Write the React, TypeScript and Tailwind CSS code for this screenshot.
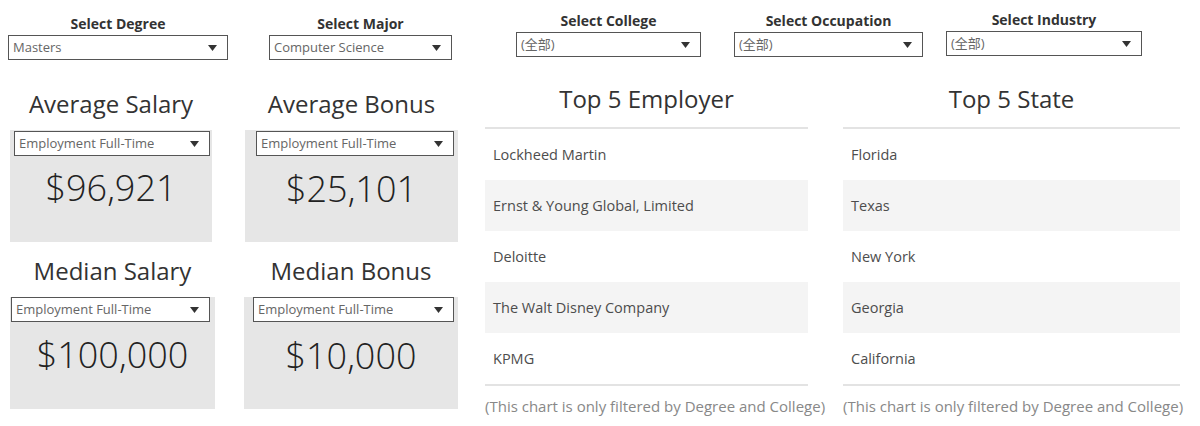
import React from 'react';

const font = { fontFamily: '"Open Sans", "Noto Sans CJK SC", sans-serif' };

const Arrow: React.FC = () => (
  <svg width="9" height="6" viewBox="0 0 9 6" className="shrink-0">
    <path d="M0 0h9L4.5 6z" fill="#333" />
  </svg>
);

const Dropdown: React.FC<{ value: string; className?: string }> = ({ value, className = '' }) => (
  <div
    className={`flex h-[25px] items-center justify-between border border-[#555] bg-white pl-[4px] pr-[10px] text-[13px] text-[#666] ${className}`}
  >
    <span className="truncate">{value}</span>
    <Arrow />
  </div>
);

const Filter: React.FC<{ label: string; value: string; className?: string }> = ({ label, value, className = '' }) => (
  <div className={`flex flex-col ${className}`}>
    <div className="text-center text-[14px] font-bold leading-[18px] text-[#333]">{label}</div>
    <Dropdown value={value} className="mt-[2px]" />
  </div>
);

const KpiCard: React.FC<{
  title: string;
  value: string;
  className?: string;
  dropClass?: string;
  valueClass?: string;
}> = ({ title, value, className = '', dropClass = '', valueClass = '' }) => (
  <div className={`flex flex-col ${className}`}>
    <div className="text-center text-[24px] leading-[32px] text-[#333]">{title}</div>
    <div className="mt-[10px] flex h-[112px] flex-col bg-[#e6e6e6]">
      <Dropdown value="Employment Full-Time" className={dropClass} />
      <div className={`text-center text-[36px] font-light leading-[44px] text-[#222] ${valueClass}`}>{value}</div>
    </div>
  </div>
);

const TopList: React.FC<{ title: string; items: string[]; className?: string }> = ({ title, items, className = '' }) => (
  <div className={`flex flex-col ${className}`}>
    <div className="text-center text-[24px] leading-[32px] text-[#333]">{title}</div>
    <div className="mt-[12px] h-[2px] bg-[#e3e3e3]" />
    {items.map((item, i) => (
      <div
        key={item}
        className={`flex h-[51px] items-center pl-[8px] text-[14.5px] text-[#4d4d4d] ${i % 2 === 1 ? 'bg-[#f4f4f4]' : 'bg-white'}`}
      >
        {item}
      </div>
    ))}
    <div className="h-[2px] bg-[#e3e3e3]" />
    <div className="mt-[10px] whitespace-nowrap text-[15px] leading-[20px] text-[#888]">
      (This chart is only filtered by Degree and College)
    </div>
  </div>
);

export default function App() {
  return (
    <div className="flex h-[426px] w-[1200px] overflow-hidden bg-white" style={font}>
      {/* left: filters + kpis */}
      <div className="flex w-[240px] flex-col pt-[15px]">
        <Filter label="Select Degree" value="Masters" className="ml-[8px] w-[220px]" />
        <KpiCard
          title="Average Salary"
          value="$96,921"
          className="ml-[10px] mt-[28px] w-[202px]"
          dropClass="ml-[4px] mt-[1px] w-[196px] h-[24px]"
          valueClass="mt-[10px]"
        />
        <KpiCard
          title="Median Salary"
          value="$100,000"
          className="ml-[10px] mt-[13px] w-[205px]"
          dropClass="ml-[1px] w-[199px]"
          valueClass="mt-[11px]"
        />
      </div>
      <div className="flex w-[230px] flex-col pt-[15px]">
        <Filter label="Select Major" value="Computer Science" className="ml-[29px] w-[183px]" />
        <KpiCard
          title="Average Bonus"
          value="$25,101"
          className="ml-[5px] mt-[28px] w-[213px]"
          dropClass="ml-[11px] mt-[1px] w-[198px] h-[24px]"
          valueClass="mt-[11px]"
        />
        <KpiCard
          title="Median Bonus"
          value="$10,000"
          className="ml-[4px] mt-[13px] w-[214px]"
          dropClass="ml-[9px] w-[201px]"
          valueClass="mt-[12px]"
        />
      </div>

      {/* right: filters + top lists */}
      <div className="flex flex-1 flex-col pt-[12px]">
        <div className="flex items-start">
          <Filter label="Select College" value="(全部)" className="ml-[46px] w-[185px]" />
          <Filter label="Select Occupation" value="(全部)" className="ml-[33px] w-[189px]" />
          <Filter label="Select Industry" value="(全部)" className="ml-[23px] -mt-[1px] w-[196px]" />
        </div>
        <div className="mt-[26px] flex items-start">
          <TopList
            title="Top 5 Employer"
            items={['Lockheed Martin', 'Ernst & Young Global, Limited', 'Deloitte', 'The Walt Disney Company', 'KPMG']}
            className="ml-[15px] w-[323px]"
          />
          <TopList
            title="Top 5 State"
            items={['Florida', 'Texas', 'New York', 'Georgia', 'California']}
            className="ml-[35px] w-[337px]"
          />
        </div>
      </div>
    </div>
  );
}
